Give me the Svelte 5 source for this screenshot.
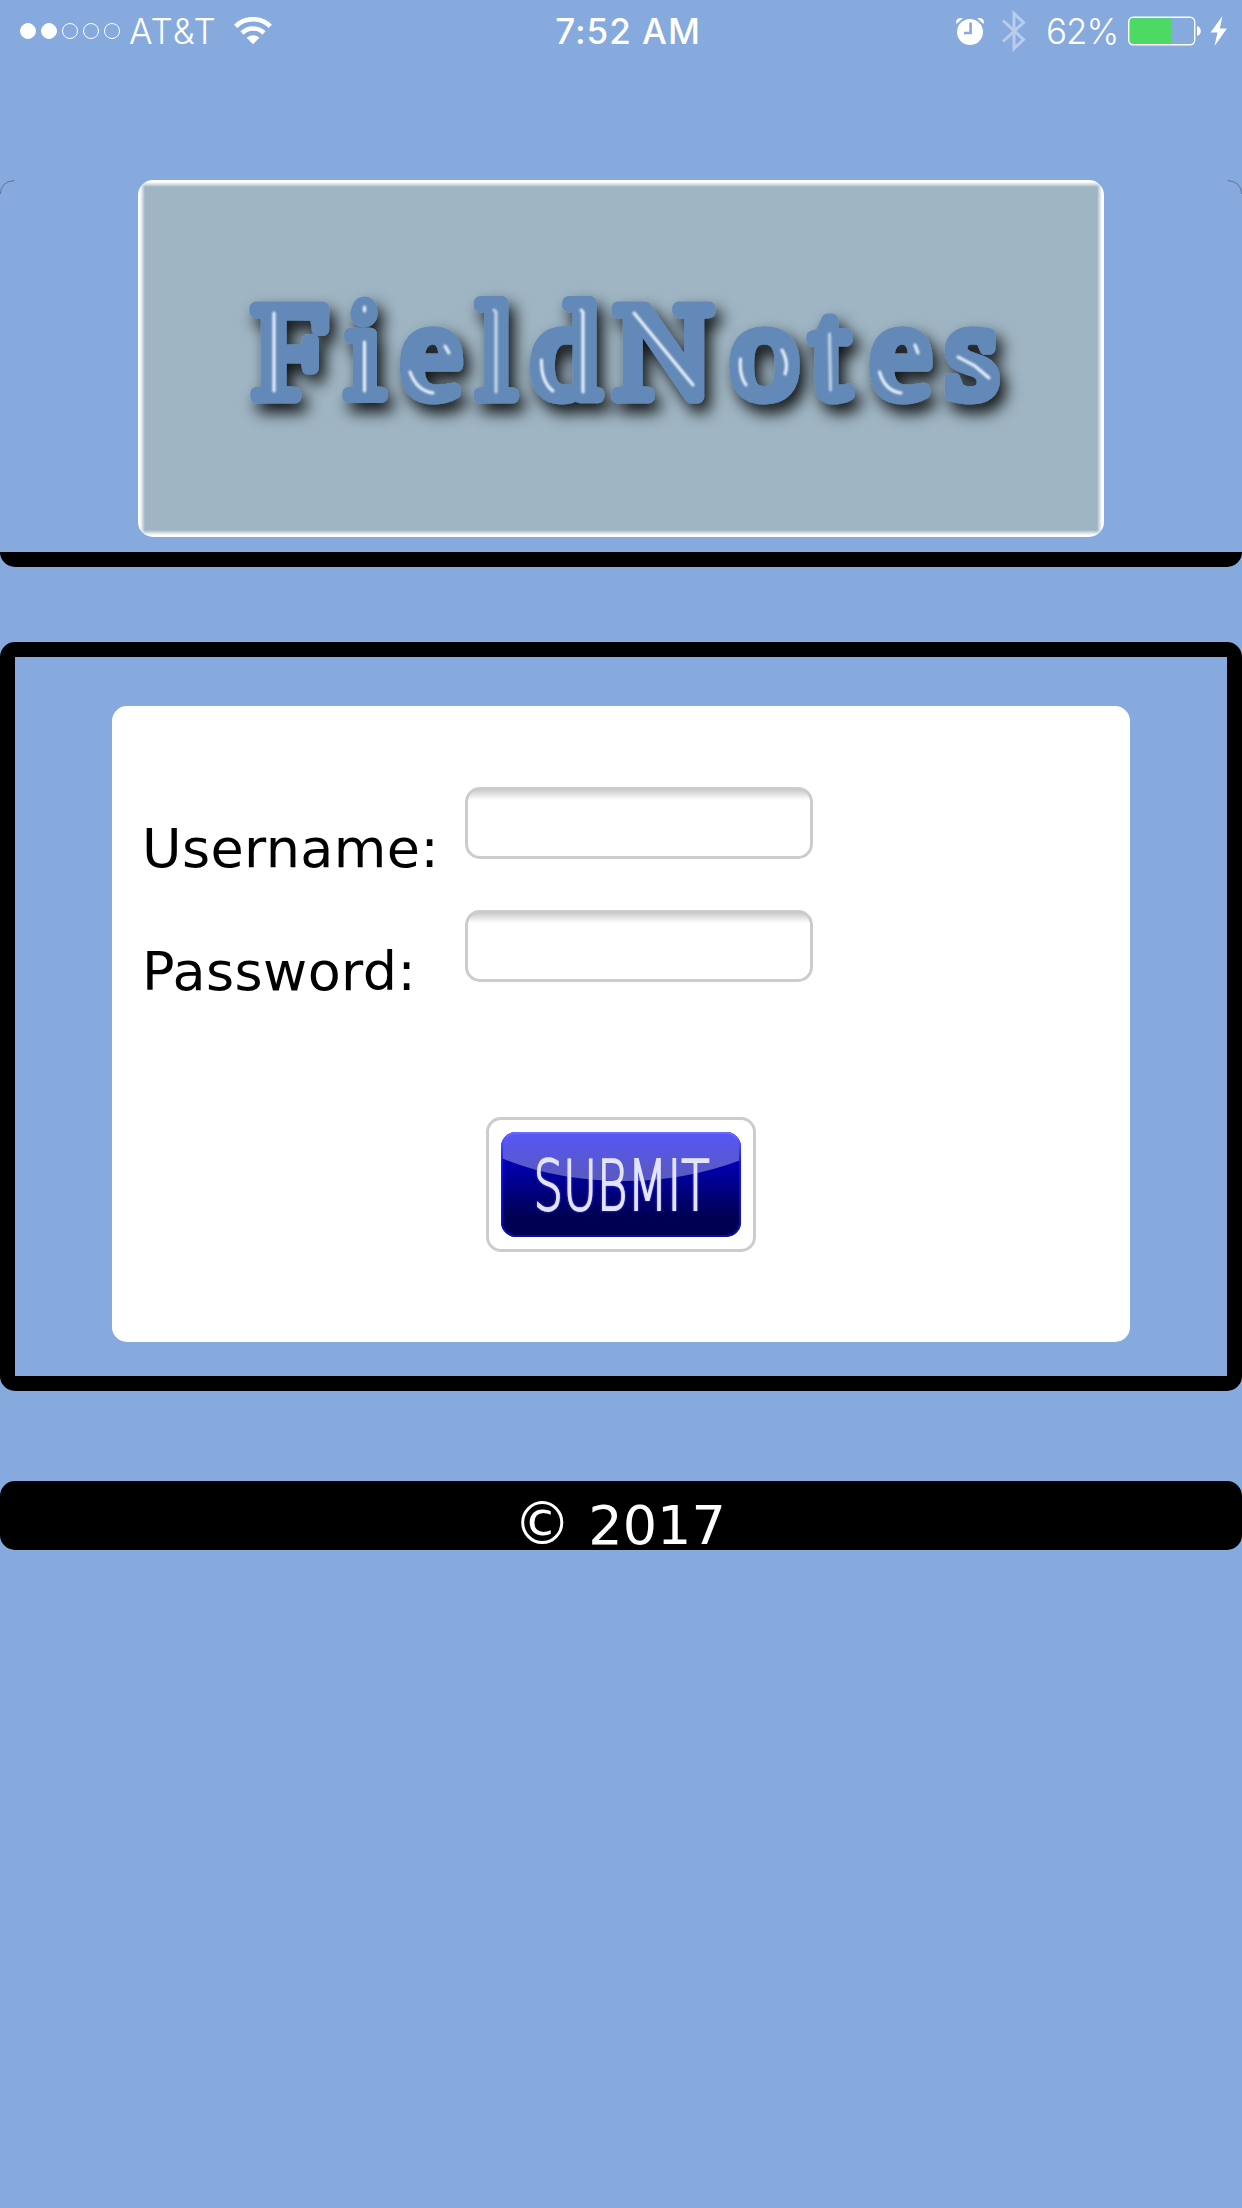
<script lang="ts">
  const signal = [true, true, false, false, false];
  const fields = [
    { id: 'username', label: 'Username:', type: 'text' },
    { id: 'password', label: 'Password:', type: 'password' }
  ];
</script>

<div class="screen">
  <div class="status">
    <div class="left">
      <div class="dots">
        {#each signal as on}
          <span class="dot" class:on></span>
        {/each}
      </div>
      <span class="carrier">AT&amp;T</span>
      <svg class="wifi" width="38" height="28" viewBox="0 0 38 28">
        <g fill="none" stroke="#fff" stroke-width="4.6">
          <path d="M1.7 9.3a24.6 24.6 0 0 1 34.6 0" />
          <path d="M8 16a15.6 15.6 0 0 1 22 0" />
        </g>
        <path d="M12.6 20.8a9 9 0 0 1 12.8 0L19 27.2z" fill="#fff" />
      </svg>
    </div>
    <span class="time">7:52 AM</span>
    <div class="right">
      <svg class="alarm" width="28" height="28" viewBox="0 0 28 28">
        <circle cx="14" cy="15" r="13" fill="#fff" />
        <path d="M.5 7C-1 2.500 2.500 0 6.800 1.200Z M27.500 7C29 2.500 25.500 0 21.200 1.200Z" fill="#fff" />
        <path d="M14.600 5.500v10.500H8" fill="none" stroke="#86a9de" stroke-width="2.600" />
      </svg>
      <svg class="bluetooth" width="24" height="42" viewBox="0 0 24 42">
        <path d="M1 10.500L21.500 29.500 12 38.500V3.500L21.500 12.500 1 31.500" fill="none" stroke="#b9ccee" stroke-width="3" />
      </svg>
      <span class="percent">62%</span>
      <svg class="battery" width="74" height="30" viewBox="0 0 74 30">
        <rect x=".7" y="1.200" width="66" height="27.600" rx="4.500" fill="none" stroke="#fff" stroke-width="1.400" />
        <path d="M4.500 2.300H43.500V27.300H4.500a2.500 2.500 0 0 1-2.500-2.500V4.800a2.500 2.500 0 0 1 2.500-2.500z" fill="#4cd964" />
        <path d="M69 10c5 1 5 9 0 10z" fill="#fff" />
      </svg>
      <svg class="bolt" width="18" height="30" viewBox="0 0 18 30">
        <path d="M12.500 0L.5 16.500H7.500L4.500 30 17 12.500H9.800z" fill="#fff" />
      </svg>
    </div>
  </div>

  <header>
    <svg class="corner" width="15" height="15" viewBox="0 0 15 15"><path d="M.3 14Q1 1.500 14.500.5" /></svg>
    <div class="logo">
      <svg width="966" height="357" viewBox="138 180 966 357">
        <defs>
          <filter id="shade" x="-10%" y="-40%" width="120%" height="190%">
            <feDropShadow dx="6" dy="9" stdDeviation="8" flood-color="#000" flood-opacity=".9" />
          </filter>
        </defs>
        <g filter="url(#shade)">
          <text y="396.500" x="252 346 401 477.500 531.500 614 730.500 811.500 870.500 945.500">FieldNotes</text>
          <circle cx="364.500" cy="309" r="12.500" fill="#6289b7" />
        </g>
        <g class="shine">
          <path d="M274 313V391" stroke-width="4" />
          <path d="M364.500 307v4M364.500 342v49" />
          <path d="M410 372Q417 391 433 393M445 346l4 7" />
          <path d="M494 310l2 2V392" opacity=".75" />
          <path d="M541.500 360Q541 382 553 391M581 310l2 2V392" />
          <path d="M634 313L693 385" stroke-width="4" />
          <path d="M740.500 359Q739 375 746 385M782 350q7 13 3 24" />
          <path d="M829.500 334L830.500 390" opacity=".7" />
          <path d="M879.500 372Q885 391 901 393M915 345l3 8" />
          <path d="M958 357l17 9 14 12" />
        </g>
      </svg>
    </div>
    <svg class="corner flip" width="15" height="15" viewBox="0 0 15 15"><path d="M.3 14Q1 1.500 14.500.5" /></svg>
  </header>

  <main>
    <form onsubmit={(e) => e.preventDefault()}>
      {#each fields as f}
        <div class="row">
          <label for={f.id} class={f.id}>{f.label}</label>
          <input id={f.id} type={f.type} />
        </div>
      {/each}
      <button type="submit" aria-label="Submit">
        <svg width="240" height="105" viewBox="0 0 240 105">
          <defs>
            <linearGradient id="base" x1="0" y1="0" x2="0" y2="1">
              <stop offset="0" stop-color="#0000d0" />
              <stop offset=".3" stop-color="#0000b0" />
              <stop offset=".8" stop-color="#000054" />
              <stop offset="1" stop-color="#000050" />
            </linearGradient>
            <linearGradient id="gloss" x1="0" y1="0" x2="0" y2="1">
              <stop offset="0" stop-color="#5656f8" />
              <stop offset="1" stop-color="#5a5abc" />
            </linearGradient>
            <linearGradient id="edge" x1="0" y1="0" x2="0" y2="1">
              <stop offset="0" stop-color="#6a6aff" />
              <stop offset=".3" stop-color="#1212f0" />
              <stop offset="1" stop-color="#0c0cb0" />
            </linearGradient>
            <clipPath id="round"><rect width="240" height="105" rx="15" /></clipPath>
            <filter id="glow" x="-10%" y="-20%" width="120%" height="140%">
              <feGaussianBlur in="SourceGraphic" stdDeviation=".6" result="soft" />
              <feDropShadow in="soft" dx="0" dy="0" stdDeviation="1.300" flood-color="#5555ff" flood-opacity="1" />
            </filter>
          </defs>
          <g clip-path="url(#round)">
            <rect width="240" height="105" fill="url(#base)" />
            <path d="M0 0H240V28Q184 49 124 49Q55 49 0 26z" fill="url(#gloss)" />
          </g>
          <rect x="1" y="1" width="238" height="103" rx="14" fill="none" stroke="url(#edge)" stroke-width="2" />
          <text class="caption" transform="translate(32.500 78) scale(.68 1)" textLength="259" lengthAdjust="spacingAndGlyphs" filter="url(#glow)">SUBMIT</text>
        </svg>
      </button>
    </form>
  </main>

  <footer><span class="mark">©</span> 2017</footer>
</div>

<style>
  :global(body) { margin: 0; background: #86a9de; }
  .screen {
    width: 1242px;
    height: 2208px;
    overflow: hidden;
    background: #86a9de;
    font-family: Verdana, "DejaVu Sans", sans-serif;
  }
  .status {
    height: 60px;
    margin-bottom: 120px;
    display: grid;
    grid-template-columns: 1fr auto 1fr;
    align-items: center;
    color: #fff;
    font: 35px/60px Inter, sans-serif;
  }
  .left, .right, .dots { display: flex; align-items: center; }
  .left { padding-left: 20px; }
  .dots { gap: 5px; }
  .dot { box-sizing: border-box; width: 16px; height: 16px; border: 1.5px solid #fff; border-radius: 50%; }
  .dot.on { background: #fff; }
  .carrier { margin-left: 9px; font-weight: 350; width: 88px; white-space: nowrap; padding-top: 1px; letter-spacing: 1px; }
  .wifi { margin-left: 17px; }
  .time { font-weight: 500; letter-spacing: 1px; padding: 1px 0 0 14px; }
  .right { justify-content: flex-end; padding-right: 14px; }
  .alarm { margin-right: 1px; }
  .bluetooth { margin-left: 17px; }
  .percent { font-weight: 350; margin: 1px 12px 0 20px; width: 70px; white-space: nowrap; letter-spacing: -1px; }
  .bolt { margin-left: 8px; }
  header {
    box-sizing: border-box;
    height: 387px;
    border-bottom: 15px solid #000;
    border-radius: 0 0 15px 15px / 0 0 15px 15px;
    display: flex;
    justify-content: space-between;
    align-items: flex-start;
  }
  .corner path { fill: none; stroke: #586f92; stroke-width: .9; }
  .flip { transform: scaleX(-1); }
  .logo {
    width: 966px;
    height: 357px;
    border-radius: 15px;
    background:
      linear-gradient(#fff 2px, #fff0 7px),
      linear-gradient(0deg, #fff 2px, #fff0 7px),
      linear-gradient(90deg, #fff 2px, #fff0 7px),
      linear-gradient(270deg, #fff 2px, #fff0 7px),
      #9fb5c3;
    overflow: hidden;
  }
  .logo svg { display: block; }
  .logo text {
    font: 136px "Liberation Serif", serif;
    fill: #6289b7;
    stroke: #6289b7;
    stroke-width: 13px;
    stroke-linejoin: round;
  }
  .shine path { fill: none; stroke: #f0f5ff; stroke-width: 3; stroke-linecap: round; }
  .shine { filter: blur(.8px); }
  main {
    box-sizing: border-box;
    height: 749px;
    margin-top: 75px;
    padding: 49px 97px 0;
    border: 15px solid #000;
    border-radius: 15px;
  }
  form {
    box-sizing: border-box;
    height: 636px;
    padding: 81px 30px 0;
    border-radius: 15px;
    background: #fff;
    display: flex;
    flex-direction: column;
  }
  .row { display: grid; grid-template-columns: 323px 348px; height: 123px; align-items: start; }
  label { padding-top: 35px; font-size: 54px; line-height: 54px; white-space: nowrap; letter-spacing: .4px; }
  input {
    box-sizing: border-box;
    width: 348px;
    height: 72px;
    margin: 0;
    border: 3px solid #ccc;
    border-radius: 15px;
    background: linear-gradient(#ccc, #fff 10px) #fff;
    outline: none;
  }
  button {
    box-sizing: border-box;
    width: 270px;
    height: 135px;
    margin: 84px auto 0;
    padding: 12px;
    border: 3px solid #ccc;
    border-radius: 15px;
    background: #fff;
  }
  button svg { display: block; }
  .caption {
    font: 200 70px "DejaVu Sans", sans-serif;
    fill: #e4e4fa;
    stroke: #e4e4fa;
    stroke-width: 1.8px;
  }
  footer {
    height: 69px;
    margin-top: 90px;
    padding-right: 3px;
    border-radius: 15px;
    background: #000;
    color: #fff;
    text-align: center;
    font-size: 54px;
    line-height: 89px;
  }
  .mark { font-size: 58px; line-height: 1; }
</style>
